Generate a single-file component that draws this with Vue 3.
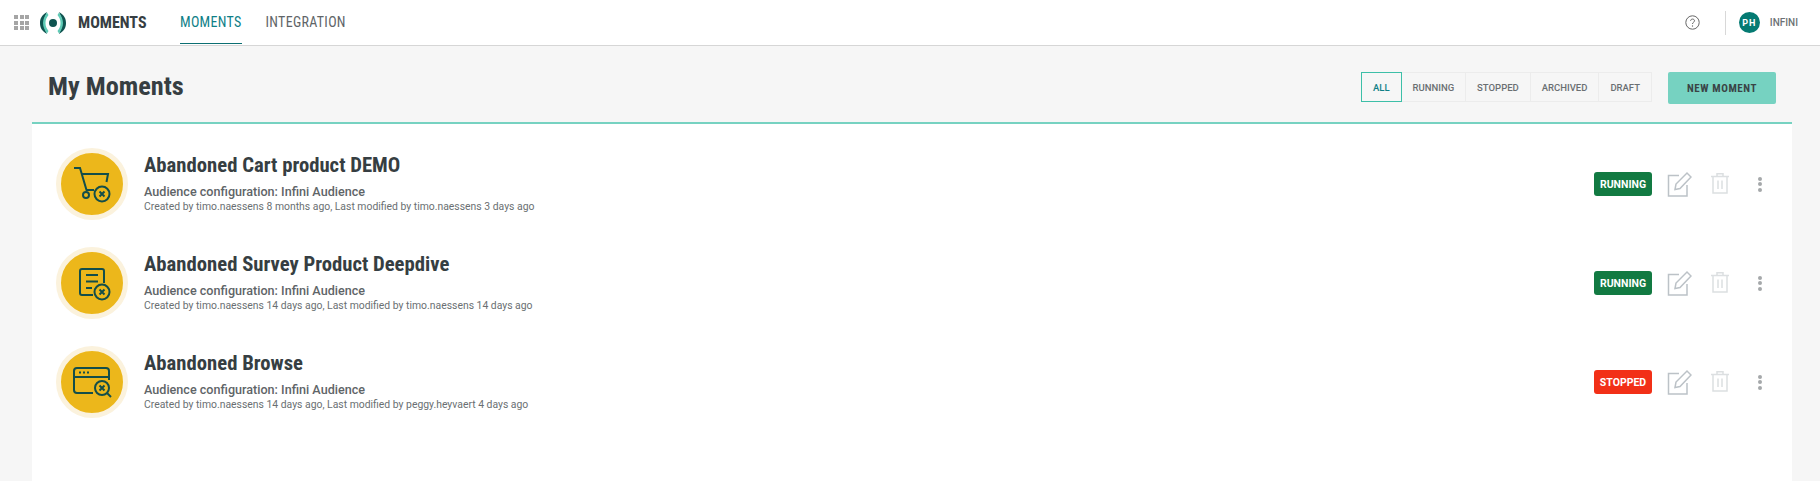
<template>
  <div class="page">
    <header class="topbar">
      <div class="apps">
        <i v-for="n in 9" :key="n"></i>
      </div>
      <svg class="logo" width="28" height="24" viewBox="0 0 28 24">
        <path d="M8 1 C2.500 4 1 8 1 12 C1 16 2.500 20 8 23 C6.500 19.500 5 16 5 12 C5 8 6.500 4.500 8 1 Z" fill="#0f5450" />
        <path d="M8 1.500 C5.500 5 4 8.500 4 12 C4 15.500 5.500 19 8 22.500 L9.500 20 C7.500 17.500 6.500 15 6.500 12 C6.500 9 7.500 6.500 9.500 4 Z" fill="#5fcbb6" />
        <path d="M20 1 C25.500 4 27 8 27 12 C27 16 25.500 20 20 23 C21.500 19.500 23 16 23 12 C23 8 21.500 4.500 20 1 Z" fill="#0f5450" />
        <path d="M20 1.500 C22.500 5 24 8.500 24 12 C24 15.500 22.500 19 20 22.500 L18.500 20 C20.500 17.500 21.500 15 21.500 12 C21.500 9 20.500 6.500 18.500 4 Z" fill="#5fcbb6" />
        <circle cx="14" cy="12" r="4" fill="#0f5450" />
      </svg>
      <span class="brand">MOMENTS</span>
      <nav class="tabs">
        <a class="tab active">MOMENTS</a>
        <a class="tab">INTEGRATION</a>
      </nav>
      <div class="user">
        <svg class="help" width="15" height="15" viewBox="0 0 15 15">
          <circle cx="7.500" cy="7.500" r="6.700" fill="none" stroke="#666" stroke-width="1" />
          <path d="M5.600 5.800 C5.600 3.500 9.500 3.500 9.500 5.800 C9.500 7.300 7.500 7.200 7.500 9" fill="none" stroke="#666" stroke-width="1" />
          <circle cx="7.500" cy="11" r="0.700" fill="#666" />
        </svg>
        <span class="divider"></span>
        <span class="avatar">PH</span>
        <span class="org">INFINI</span>
      </div>
    </header>

    <main class="content">
      <div class="head">
        <h1>My Moments</h1>
        <div class="filters">
          <button v-for="f in filters" :key="f" class="filter" :class="{ selected: f === 'ALL' }">{{ f }}</button>
        </div>
        <button class="new-btn">NEW MOMENT</button>
      </div>

      <section class="card">
        <article v-for="m in moments" :key="m.title" class="row">
          <div class="badge-icon">
            <svg v-if="m.icon === 'cart'" width="40" height="40" viewBox="0 0 40 40" fill="none" stroke="#134e4a" stroke-width="2">
              <path d="M2 4 H8 L14.500 26 H22" />
              <path d="M9.500 10 H36 L34.500 18" />
              <circle cx="14" cy="31" r="3" />
              <circle cx="30" cy="30" r="7.500" />
              <path d="M27.500 27.500 L32.500 32.500 M32.500 27.500 L27.500 32.500" />
            </svg>
            <svg v-else-if="m.icon === 'survey'" width="40" height="40" viewBox="0 0 40 40" fill="none" stroke="#134e4a" stroke-width="2">
              <path d="M21 32 H10 Q8 32 8 30 V8 Q8 6 10 6 H30 Q32 6 32 8 V20" />
              <path d="M14 12 H26 M14 18.500 H26 M14 25 H20" />
              <circle cx="30" cy="29" r="7.500" />
              <path d="M27.500 26.500 L32.500 31.500 M32.500 26.500 L27.500 31.500" />
            </svg>
            <svg v-else width="40" height="40" viewBox="0 0 40 40" fill="none" stroke="#134e4a" stroke-width="2">
              <path d="M21 31 H5 Q2 31 2 28 V9 Q2 6 5 6 H34 Q37 6 37 9 V18" />
              <path d="M2 15 H37" />
              <path d="M7 10.500 H9 M11 10.500 H13 M15 10.500 H17" />
              <circle cx="30" cy="26" r="7" />
              <path d="M27.500 23.500 L32.500 28.500 M32.500 23.500 L27.500 28.500" />
              <path d="M35 31 L39 35" />
            </svg>
          </div>
          <div class="info">
            <h2>{{ m.title }}</h2>
            <p class="audience">Audience configuration: Infini Audience</p>
            <p class="meta">{{ m.meta }}</p>
          </div>
          <div class="actions">
            <span class="status" :class="m.status.toLowerCase()">{{ m.status }}</span>
            <svg width="26" height="26" viewBox="0 0 26 26" fill="none" stroke="#bcc2c7" stroke-width="1.500">
              <path d="M13 4.500 H2.500 V25 H21 V14" />
              <path d="M9 18.500 L10 13 L21 2 L25 6 L14 17.500 Z" />
            </svg>
            <svg class="trash" width="20" height="22" viewBox="0 0 20 22" fill="none" stroke="#dcdfe1" stroke-width="1.500">
              <path d="M1 3.500 H19 M7 3.500 V0.750 H13 V3.500" />
              <path d="M3 3.500 V20 H17 V3.500" />
              <path d="M8 7.500 V16 M12 7.500 V16" />
            </svg>
            <span class="more"><i></i><i></i><i></i></span>
          </div>
        </article>
      </section>
    </main>
  </div>
</template>

<script setup>
const filters = ['ALL', 'RUNNING', 'STOPPED', 'ARCHIVED', 'DRAFT']

const moments = [
  {
    title: 'Abandoned Cart product DEMO',
    icon: 'cart',
    status: 'RUNNING',
    meta: 'Created by timo.naessens 8 months ago, Last modified by timo.naessens 3 days ago'
  },
  {
    title: 'Abandoned Survey Product Deepdive',
    icon: 'survey',
    status: 'RUNNING',
    meta: 'Created by timo.naessens 14 days ago, Last modified by timo.naessens 14 days ago'
  },
  {
    title: 'Abandoned Browse',
    icon: 'browse',
    status: 'STOPPED',
    meta: 'Created by timo.naessens 14 days ago, Last modified by peggy.heyvaert 4 days ago'
  }
]
</script>

<style>
html, body {
  margin: 0;
  overflow: hidden;
}
</style>

<style scoped>
.page {
  height: 481px;
  display: flex;
  flex-direction: column;
  background: #f6f6f6;
  font-family: Roboto, "Liberation Sans", sans-serif;
  color: #363e42;
}

.topbar {
  height: 45px;
  flex: none;
  display: flex;
  align-items: center;
  background: #fff;
  border-bottom: 1px solid #d6d6d6;
  padding: 0 22px 0 14px;
}

.apps {
  display: grid;
  grid-template-columns: repeat(3, 4px);
  gap: 1.500px;
  margin-right: 10px;
}

.apps i {
  width: 4px;
  height: 4px;
  background: #a5a5a5;
}

.logo {
  margin-right: 11px;
}

.brand {
  font-size: 16px;
  font-weight: 700;
  font-stretch: 75%;
  width: 68px;
  color: #363e42;
}

.tabs {
  display: flex;
  align-self: stretch;
  margin-left: 34px;
  gap: 24px;
}

.tab {
  height: 44px;
  display: flex;
  align-items: center;
  font-size: 14px;
  font-stretch: 75%;
  letter-spacing: 0.300px;
  color: #5f6568;
  box-sizing: border-box;
}

.tab.active {
  color: #0f8087;
  border-bottom: 1px solid #0c6f72;
}

.user {
  margin-left: auto;
  display: flex;
  align-items: center;
}

.help {
  margin-right: 25px;
}

.divider {
  width: 1px;
  height: 24px;
  background: #d8d8d8;
  margin-right: 13px;
}

.avatar {
  width: 21px;
  height: 21px;
  border-radius: 50%;
  background: #047a72;
  color: #fff;
  font-size: 9px;
  font-weight: 700;
  letter-spacing: 1px;
  display: flex;
  align-items: center;
  justify-content: center;
  margin-right: 10px;
}

.org {
  font-size: 10px;
  font-weight: 500;
  color: #6d7275;
}

.content {
  flex: 1;
  margin: 0 28px 0 32px;
  display: flex;
  flex-direction: column;
}

.head {
  height: 76px;
  flex: none;
  box-sizing: border-box;
  display: flex;
  align-items: flex-start;
  padding: 26px 16px 0 16px;
}

h1 {
  margin: -2px auto 0 0;
  font-size: 26.300px;
  line-height: 32px;
  font-weight: 700;
  font-stretch: 75%;
  color: #363e42;
}

.filters {
  display: flex;
  margin-right: 16px;
}

.filter {
  height: 30px;
  padding: 0 11px;
  border: 1px solid #ececec;
  border-left: none;
  background: #f6f6f6;
  font-family: inherit;
  font-size: 9.500px;
  font-weight: 500;
  color: #6a6f72;
}

.filter.selected {
  border: 1px solid #3dbfa8;
  color: #0f8087;
}

.new-btn {
  width: 108px;
  height: 32px;
  border: none;
  border-radius: 2px;
  background: #76d2c1;
  font-family: inherit;
  font-size: 11px;
  font-weight: 700;
  font-stretch: 75%;
  letter-spacing: 0.600px;
  color: #3a4446;
}

.card {
  flex: 1;
  background: #fff;
  border-top: 2px solid #76d2c1;
  padding: 24px 30px 0 24px;
  display: flex;
  flex-direction: column;
  gap: 27px;
}

.row {
  height: 72px;
  display: flex;
  align-items: center;
}

.badge-icon {
  width: 62px;
  height: 62px;
  border-radius: 50%;
  background: #ecb71b;
  border: 5px solid #fbf2dd;
  display: flex;
  align-items: center;
  justify-content: center;
  margin-right: 16px;
  flex: none;
}

.info {
  flex: 1;
  min-width: 0;
  align-self: flex-start;
  padding-top: 4px;
}

h2 {
  margin: 0 0 6px;
  font-size: 20.700px;
  line-height: 26px;
  font-weight: 700;
  font-stretch: 75%;
  color: #363e42;
}

.audience {
  margin: 0;
  font-size: 12.600px;
  line-height: 16px;
  font-weight: 500;
  color: #5f6568;
}

.meta {
  margin: 0;
  font-size: 10.400px;
  line-height: 14px;
  color: #6a6f72;
}

.actions {
  display: flex;
  align-items: center;
}

.status {
  width: 58px;
  height: 24px;
  border-radius: 3px;
  display: flex;
  align-items: center;
  justify-content: center;
  color: #fff;
  font-size: 10.500px;
  font-weight: 700;
  margin-right: 14px;
}

.status.running {
  background: #127a42;
}

.status.stopped {
  background: #f23017;
}

.trash {
  margin-left: 18px;
}

.more {
  display: flex;
  flex-direction: column;
  gap: 1.500px;
  margin-left: 28px;
}

.more i {
  width: 4px;
  height: 4px;
  border-radius: 50%;
  background: #a5a8aa;
}
</style>
